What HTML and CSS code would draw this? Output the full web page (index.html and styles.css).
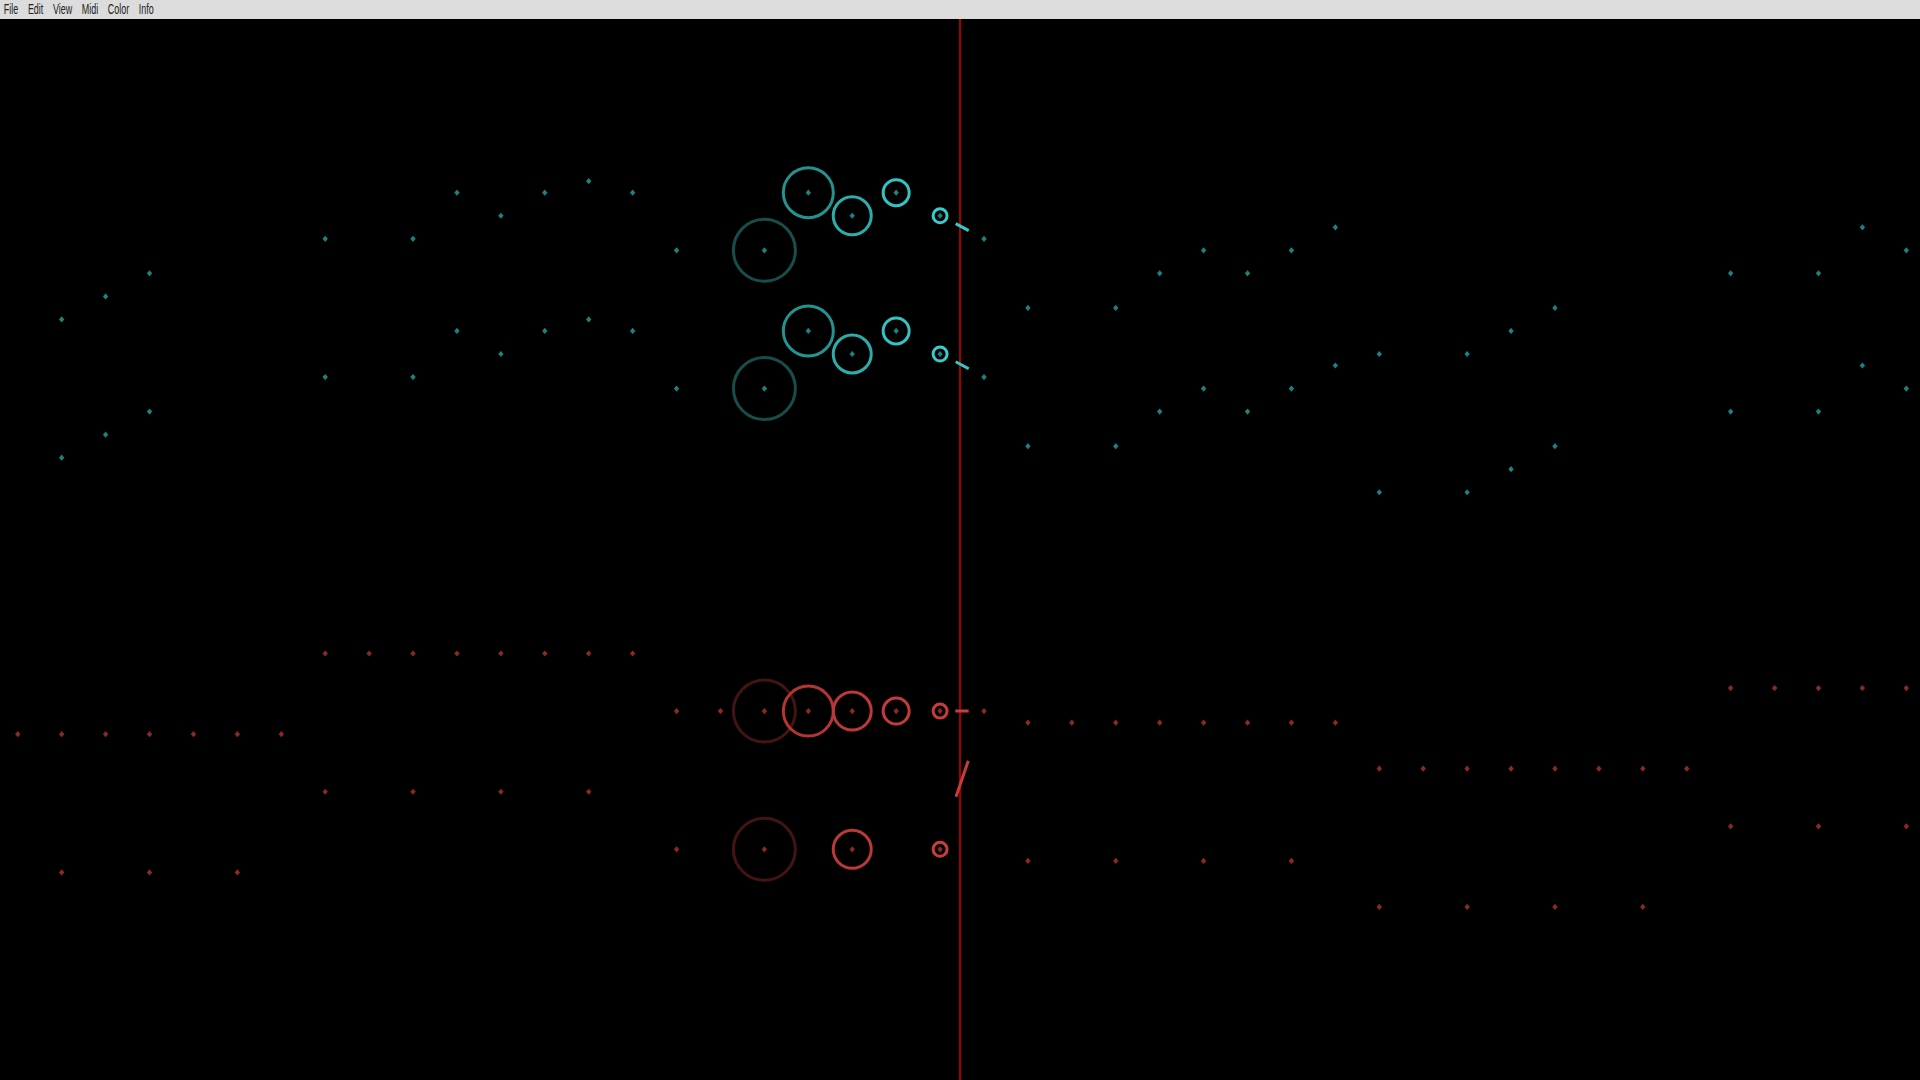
FILE: index.html
```html
<!DOCTYPE html>
<html lang="en">
<head>
<meta charset="utf-8">
<title>Sequencer</title>
<link rel="stylesheet" href="styles.css">
</head>
<body>
<header class="menubar">
  <nav class="menu">
    <span class="menu-item">File</span>
    <span class="menu-item">Edit</span>
    <span class="menu-item">View</span>
    <span class="menu-item">Midi</span>
    <span class="menu-item">Color</span>
    <span class="menu-item">Info</span>
  </nav>
</header>
<main class="stage">
  <svg id="canvas" class="canvas" width="1920" height="1061" viewBox="0 19 1920 1061" xmlns="http://www.w3.org/2000/svg">
    <defs>
      <polygon id="dot" points="0,-3.1 2.7,0 0,3.1 -2.7,0"/>
    </defs>
    <line class="playhead" x1="960" y1="19" x2="960" y2="1080"/>
    <g id="circles"></g>
    <g class="segments">
      <line class="seg-cyan" x1="955.7" y1="223.6" x2="968.7" y2="230.6"/>
      <line class="seg-cyan" x1="955.7" y1="361.8" x2="968.7" y2="368.8"/>
      <line class="seg-red" x1="955.3" y1="711" x2="968.7" y2="711"/>
      <line class="seg-red" x1="968.3" y1="760.7" x2="956" y2="796.7"/>
    </g>
    <g id="dots"></g>
  </svg>
</main>
<script src="script.js"></script>
</body>
</html>
```
FILE: styles.css
```css
html, body {
  margin: 0;
  padding: 0;
  background: #000;
  width: 1920px;
  height: 1080px;
  overflow: hidden;
}

.menubar {
  height: 19px;
  background: #dcdcdc;
  overflow: hidden;
}

.menu {
  display: flex;
  gap: 15px;
  padding-left: 6px;
  transform: scaleX(0.64);
  transform-origin: 0 0;
  font-family: "Liberation Sans", Arial, sans-serif;
  font-size: 14px;
  line-height: 19px;
  color: #222;
  white-space: nowrap;
}

.stage {
  display: block;
}

.canvas {
  display: block;
}

.playhead {
  stroke: #a00000;
  stroke-width: 2;
}

.ring {
  fill: none;
  stroke-width: 3;
}

.c0 { stroke: #174e4c; }
.c1 { stroke: #24938f; }
.c2 { stroke: #2cadab; }
.c3 { stroke: #34c3c2; }
.c4 { stroke: #38cccc; }

.r0 { stroke: #441414; }
.r1 { stroke: #b43535; }
.r2 { stroke: #bd3838; }
.r3 { stroke: #c53b3b; }
.r4 { stroke: #c83c3c; }

.seg-cyan {
  stroke: #36c8c8;
  stroke-width: 3;
}

.seg-red {
  stroke: #c83c3c;
  stroke-width: 3;
}

.dot-cyan { fill: #1f807e; }
.dot-red { fill: #8e2828; }
```
FILE: script.js
```js
(function () {
  var NS = "http://www.w3.org/2000/svg";
  var X = function (k) { return 764.4 + 43.92 * k; };
  var Y = function (n) { return 181.2 + 11.52 * n; };

  var cyanBase = [
    [-7,1],[-5,1],[-4,0],[-3,1],[-6,3],[-10,5],[-8,5],[-2,6],
    [-14,8],[-15,10],[-16,12],
    [0,6],[1,1],[2,3],[3,1],[4,3],[5,5],
    [6,11],[8,11],[9,8],[10,6],[11,8],[12,6],[13,4],
    [14,15],[16,15],[17,13],[18,11],
    [22,8],[24,8],[25,4],[26,6]
  ];

  var redRows = [
    [41, [-10,-9,-8,-7,-6,-5,-4,-3]],
    [48, [-17,-16,-15,-14,-13,-12,-11]],
    [46, [-2,-1,0,1,2,3,4,5]],
    [47, [6,7,8,9,10,11,12,13]],
    [51, [14,15,16,17,18,19,20,21]],
    [44, [22,23,24,25,26]],
    [53, [-10,-8,-6,-4]],
    [58, [-2,0,2,4]],
    [60, [-16,-14,-12]],
    [59, [6,8,10,12]],
    [63, [14,16,18,20]],
    [56, [22,24,26]]
  ];

  var radii = [31, 25, 19, 13, 7];

  var circles = [];
  [0, 12].forEach(function (off) {
    circles.push(["c", 0, 6 + off], ["c", 1, 1 + off], ["c", 2, 3 + off], ["c", 3, 1 + off], ["c", 4, 3 + off]);
  });
  circles.push(["r", 0, 46], ["r", 1, 46], ["r", 2, 46], ["r", 3, 46], ["r", 4, 46]);
  circles.push(["r", 0, 58], ["r", 2, 58], ["r", 4, 58]);

  var cg = document.getElementById("circles");
  circles.forEach(function (c) {
    var el = document.createElementNS(NS, "circle");
    el.setAttribute("cx", X(c[1]).toFixed(2));
    el.setAttribute("cy", Y(c[2]).toFixed(2));
    el.setAttribute("r", radii[c[1]]);
    el.setAttribute("class", "ring " + c[0] + c[1]);
    cg.appendChild(el);
  });

  var dg = document.getElementById("dots");
  function dot(k, n, cls) {
    var u = document.createElementNS(NS, "use");
    u.setAttribute("href", "#dot");
    u.setAttribute("x", X(k).toFixed(2));
    u.setAttribute("y", Y(n).toFixed(2));
    u.setAttribute("class", cls);
    dg.appendChild(u);
  }

  [0, 12].forEach(function (off) {
    cyanBase.forEach(function (p) { dot(p[0], p[1] + off, "dot-cyan"); });
  });
  redRows.forEach(function (row) {
    row[1].forEach(function (k) { dot(k, row[0], "dot-red"); });
  });
})();
```
